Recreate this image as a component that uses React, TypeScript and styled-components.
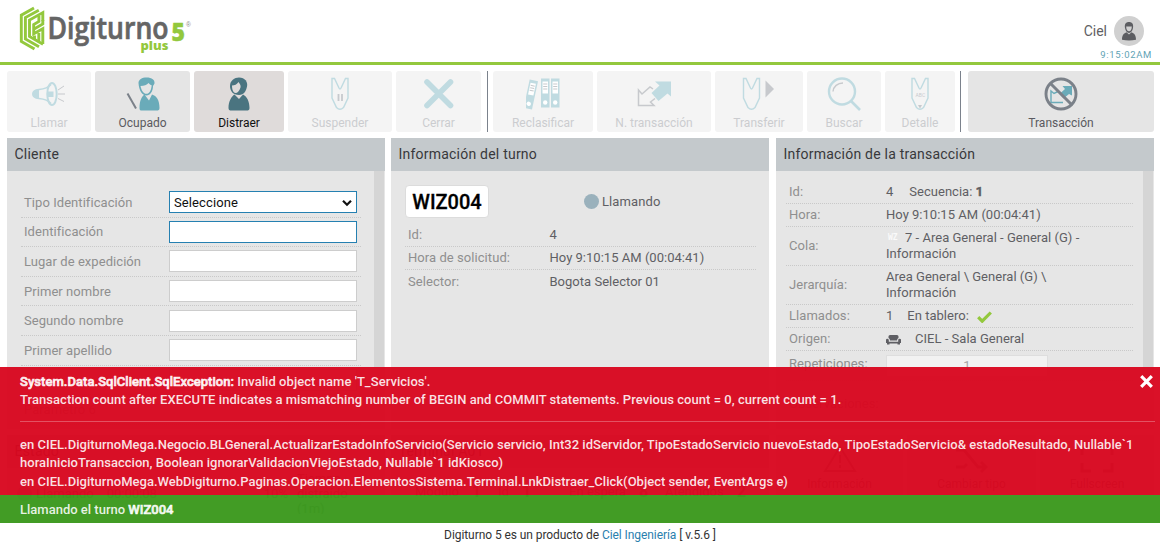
import React from "react";
import styled, { createGlobalStyle, css } from "styled-components";

const Global = createGlobalStyle`
  * { box-sizing: border-box; }
  html, body { margin: 0; padding: 0; background: #fff; overflow: hidden; }
  body { font-family: Roboto, "Liberation Sans", sans-serif; font-size: 13px; color: #5f5f64; }
`;

const Page = styled.div`
  position: relative;
  display: flex;
  flex-direction: column;
  width: 1160px;
  height: 547px;
  overflow: hidden;
`;

/* ---------- header ---------- */
const Header = styled.header`
  display: flex;
  justify-content: space-between;
  height: 65px;
  flex: none;
  border-bottom: 3px solid #93c83d;
`;
const LogoBox = styled.div`
  padding-left: 16px;
  line-height: 0;
`;
const UserBox = styled.div`
  display: flex;
  flex-direction: column;
  align-items: flex-end;
  padding: 16px 8px 0 0;
`;
const UserLine = styled.div`
  display: flex;
  align-items: center;
  gap: 7px;
  padding-right: 8px;
  font-size: 14px;
  line-height: 30px;
`;
const Clock = styled.div`
  font-size: 9.5px;
  line-height: 17px;
  letter-spacing: 0.65px;
  color: #5fa3b5;
`;

/* ---------- toolbar ---------- */
const Toolbar = styled.nav`
  display: flex;
  gap: 4px;
  height: 61px;
  flex: none;
  margin: 6px 6px 0 7px;
`;
type Tone = "normal" | "disabled" | "active";
const ToolButton = styled.div<{ $w: number; $tone: Tone }>`
  display: flex;
  flex-direction: column;
  align-items: center;
  flex: none;
  width: ${(p) => p.$w}px;
  padding-top: 6px;
  border-radius: 3px;
  background: #e5e5e5;
  color: #5a5a60;
  ${(p) => p.$tone === "disabled" && css`opacity: 0.42; color: #84888f;`}
  ${(p) => p.$tone === "active" && css`background: #dfdbda; color: #111;`}
`;
const ToolLabel = styled.span`
  margin-top: 4px;
  font-size: 12px;
  line-height: 16px;
  white-space: nowrap;
`;
const Divider = styled.i<{ $after: number; $before: number }>`
  flex: none;
  width: 1px;
  margin: 0 ${(p) => p.$after}px 0 ${(p) => p.$before}px;
  background: #7b828c;
`;

/* ---------- panels ---------- */
const Board = styled.main`
  display: grid;
  grid-template-columns: 384px 385px 378px;
  grid-template-rows: 291px 79px;
  row-gap: 6px;
  margin: 6px 0 0 7px;
`;
const Panel = styled.section`
  display: flex;
  flex-direction: column;
  width: 378px;
  min-height: 0;
  overflow: hidden;
  background: #e6e6e6;
`;
const PanelTitle = styled.h2`
  flex: none;
  margin: 0;
  height: 33px;
  padding-left: 7.5px;
  background: #c4c9cc;
  color: #38383b;
  font-size: 14px;
  font-weight: 400;
  line-height: 32px;
  letter-spacing: 0.22px;
`;
const PanelBody = styled.div`
  display: flex;
  flex: 1;
  min-height: 0;
`;
const Scroller = styled.i<{ $thumb: number }>`
  flex: none;
  width: 10px;
  height: ${(p) => p.$thumb}px;
  margin-right: 1px;
  background: #d5d5d5;
`;
const Form = styled.div`
  flex: 1;
  margin: 17px 13px 0 14px;
`;
const Line = css`
  border-bottom: 1px dotted #c9c9c9;
`;
const FormRow = styled.div`
  ${Line}
  display: flex;
  align-items: center;
  justify-content: space-between;
  height: 29.6px;
  padding: 0 4px 0 3px;
`;
const Label = styled.span<{ $w?: number }>`
  flex: none;
  ${(p) => p.$w && css`width: ${p.$w}px;`}
  color: #8f8f8f;
  letter-spacing: 0.06px;
`;
const Field = styled.div<{ $focus?: boolean }>`
  display: flex;
  align-items: center;
  justify-content: space-between;
  width: 188px;
  height: 22px;
  padding: 1px 3px 0 4px;
  border: 1px solid ${(p) => (p.$focus ? "#2580b1" : "#cdcdcd")};
  background: #fff;
  color: #111;
  letter-spacing: 0.1px;
`;

const Info = styled.div<{ $top: number; $left: number; $right: number }>`
  flex: 1;
  margin: ${(p) => p.$top}px ${(p) => p.$right}px 0 ${(p) => p.$left}px;
`;
const InfoRow = styled.div<{ $h?: number; $last?: boolean }>`
  ${Line}
  ${(p) => p.$last && css`border-bottom: 0;`}
  display: flex;
  align-items: center;
  height: ${(p) => p.$h ?? 23}px;
  padding-left: 3px;
  line-height: 16px;
  letter-spacing: 0.02px;
`;
const Value = styled.div`
  white-space: nowrap;
`;
const Gap = styled.span<{ $w: number }>`
  display: inline-block;
  width: ${(p) => p.$w}px;
`;
const TurnHead = styled.div`
  display: flex;
  align-items: center;
  height: 32px;
  margin-bottom: 7px;
`;
const Ticket = styled.b`
  width: 84px;
  border: 1px solid #dcdcdc;
  border-radius: 4px;
  background: #fff;
  color: #000;
  font-size: 20px;
  font-weight: 500;
  line-height: 32px;
  height: 33px;
  text-align: center;
  -webkit-text-stroke: 0.3px #000;
`;
const Dot = styled.i`
  flex: none;
  width: 15px;
  height: 15px;
  margin-right: 3px;
  border-radius: 50%;
  background: #9ab1bc;
`;
const TurnState = styled.div`
  display: flex;
  align-items: center;
  margin-left: 95px;
  letter-spacing: 0.1px;
`;
const QueueTag = styled.b`
  display: inline-block;
  width: 19px;
  padding-left: 2px;
  color: #fafafa;
  font: bold 8px/8px "DejaVu Sans Mono", monospace;
  vertical-align: 2px;
`;
const Stepper = styled.div`
  align-self: flex-start;
  width: 162px;
  height: 22px;
  margin-top: 4px;
  border: 1px solid #dedede;
  background: #f2f2f2;
  color: #a5a5a5;
  line-height: 20px;
  text-align: center;
`;
const RepeatLabel = styled(Label)`
  align-self: flex-start;
  margin-top: 5px;
`;
const Notes = styled.div`
  width: 243px;
  height: 42px;
  border: 1px solid #dcdcdc;
`;

const StatusLine = styled.div`
  display: flex;
  align-items: center;
  height: 46px;
  padding-top: 4px;
  padding-left: 10px;
  gap: 1px;
`;
const Meter = styled.span<{ $ml: number; $w?: number }>`
  margin-left: ${(p) => p.$ml}px;
  ${(p) => p.$w && css`width: ${p.$w}px;`}
  line-height: 15px;
`;
const Counters = styled.div`
  display: flex;
  align-items: center;
  height: 50px;
  padding-left: 24px;
  gap: 13px;
  b { font-size: 16px; margin-right: 4px; }
`;
const Shortcuts = styled.div`
  display: grid;
  grid-template-columns: 127px 129px 1fr;
  gap: 4px;
`;
const Shortcut = styled.div`
  display: flex;
  flex-direction: column;
  align-items: center;
  padding-top: 10px;
  gap: 4px;
  font-size: 12px;
  background: #e5e5e5;
`;

/* ---------- notifications ---------- */
const Notices = styled.div`
  position: absolute;
  left: 0;
  top: 367px;
  width: 1160px;
  color: rgba(255, 255, 255, 0.88);
  font-size: 13px;
  font-weight: 500;
`;
const ErrorNotice = styled.div`
  display: flex;
  height: 128px;
  padding: 6px 5px 0 20px;
  background: rgba(217, 7, 31, 0.96);
  line-height: 18px;
`;
const ErrorText = styled.div`
  flex: 1;
  white-space: nowrap;
`;
const ErrorLine = styled.div<{ $ls: number; $drop?: number }>`
  padding-top: ${(p) => p.$drop ?? 0}px;
  letter-spacing: ${(p) => p.$ls}px;
`;
const Strong = styled.b`
  font-weight: 500;
  -webkit-text-stroke: 0.7px currentColor;
`;
const Rule = styled.hr`
  margin: 12px 0 14px;
  height: 1px;
  border: 0;
  background: rgba(255, 255, 255, 0.28);
`;
const CloseIcon = styled.svg`
  position: absolute;
  top: 8px;
  right: 7px;
`;
const SuccessNotice = styled.div`
  height: 28px;
  padding-left: 20px;
  background: rgba(60, 153, 30, 0.97);
  line-height: 29px;
`;

const Footer = styled.footer`
  position: absolute;
  left: 0;
  bottom: 0;
  width: 1160px;
  height: 24px;
  color: #333;
  font-size: 12px;
  line-height: 24px;
  letter-spacing: -0.07px;
  text-align: center;
  a { color: #2a7fae; }
`;

/* ---------- drawings ---------- */
const Logo = () => (
  <svg width="180" height="60" viewBox="16 0 180 60">
    <g fill="none" stroke="#93c83d" strokeWidth="2.900" strokeLinejoin="miter">
      <path d="M34 8L21.300 15.200V41.500L34.500 49" />
      <path d="M38.800 10.200L25.400 17.500V39L39 46.800" />
      <path d="M42.800 21V12.600L29.500 20V36.500L43 44.200" />
      <path d="M38.900 16V21.500L33.700 24.500V33.800L42.800 28.800V44" />
      <path d="M33.700 29.300L42.800 24V20M38.800 33V41M34.500 35.500V39" />
    </g>
    <text x="47.500" y="39" fontFamily="Open Sans" fontWeight="600" fontSize="30" fill="#656565" stroke="#656565" strokeWidth=".7" textLength="121" lengthAdjust="spacingAndGlyphs">Digiturno</text>
    <text x="171.500" y="40.500" fontFamily="Open Sans" fontWeight="800" fontSize="25" fill="#93c83d" stroke="#93c83d" strokeWidth=".4" textLength="13.500" lengthAdjust="spacingAndGlyphs">5</text>
    <text x="140.500" y="50" fontFamily="Open Sans" fontWeight="800" fontSize="13" fill="#93c83d" textLength="28" lengthAdjust="spacingAndGlyphs">plus</text>
    <text x="186" y="27" fontFamily="Liberation Sans" fontSize="6.500" fill="#8a8a8a">®</text>
  </svg>
);

const Avatar = () => (
  <svg width="30" height="30" viewBox="0 0 30 30">
    <circle cx="15" cy="15" r="15" fill="#d0d0d0" />
    <path fill="#5c5d61" d="M8 23.800C8 19 10 17.300 12.500 16.300L15 18.500L17.500 16.300C20 17.300 22 19 22 23.800Q15 25 8 23.800Z" />
    <path fill="#5c5d61" d="M11 12C10.200 8 12 6 15 6s4.800 2 4 6c-.5 2.800-2 5-4 5s-3.500-2.200-4-5z" />
    <path fill="#d0d0d0" d="M12.200 10.500h5.600c0 3-1.100 4.700-2.800 4.700s-2.800-1.700-2.800-4.700z" />
  </svg>
);

const Icon = styled.svg.attrs({ width: 34, height: 34, viewBox: "0 0 34 34", fill: "none" })`
  flex: none;
`;
const TEAL = "#6aabb9";
const GREY = "#7b8189";

const CallIcon = () => (
  <Icon>
    <path stroke={TEAL} strokeWidth="1.600" d="M19 7.500C16 11 12 12 7 12.500 2 13 .8 15 .8 17s1.200 4 6.200 4.500c5 .5 9 1.500 12 5" />
    <path fill={TEAL} d="M7 12.500C2 13 .8 15 .8 17s1.200 4 6.200 4.500z" />
    <ellipse cx="20" cy="17" rx="4.700" ry="11" stroke={TEAL} strokeWidth="2" />
    <path fill={TEAL} d="M16 14.500h5.500v5.500H16z" />
    <path stroke={GREY} d="M26 13l6-4M26 17h7M26 21.500l6 3" />
  </Icon>
);
const BusyIcon = () => (
  <Icon>
    <path stroke={GREY} strokeWidth="2" d="M1.500 16.500l8.500 15" />
    <path fill={TEAL} d="M12.500 6C12.500 2.500 16 .5 20.500 .5 26 .5 29 3 28.500 6.500L27 9C27 14.500 24 18.500 20.500 18.500 16 18.500 13 13.500 12.500 6z" />
    <path fill="#e5e5e5" d="M14.500 9c3.500 0 6.500-1 8-3 1 1 2 2 3.200 2.200-.4 5-2.500 8.600-5.200 8.600-3 0-5.200-3.400-6-7.800z" />
    <path fill={TEAL} d="M13.500 31C13.500 23 16 19.500 18.500 17.500l4.500 6 3-6c4.500 1.500 7.500 5.500 7.500 13.500 0 2-1 2.500-3 2.500H16c-2 0-2.500-.5-2.500-2.500z" />
  </Icon>
);
const DistractIcon = () => (
  <Icon>
    <path fill="#4a7480" d="M8 9C8 3.500 12.500 .5 17 .5 23 .5 26 5 25 9.500 24 14 22 18 17 18 11 18 8 14 8 9z" />
    <path fill="#dfdbda" d="M10 8.500C12.500 8.500 15 7.500 16.500 5c1.500 2 2.500 3.500 2 5.500-1 3.500-3 5.500-5 5.500-2.500 0-3.500-4-3.500-7.500z" />
    <path fill="#4a7480" d="M6.500 31C6.500 24 9.500 19.500 12.500 17.500l4.500 4.500 4-4.500c4 2 6.500 7 6.500 13.500 0 2-1 2.500-3 2.500H9.500c-2 0-3-.5-3-2.500z" />
  </Icon>
);
const tieShape = "M9 1.500h2.500l4 8.500q1.500 4 3 0l4-8.500H25V21l-4.500 9.500q-3.500 3.500-7 0L9 21z";
const PauseIcon = () => (
  <Icon><path stroke={TEAL} strokeWidth="1.400" d={tieShape} /><path stroke={GREY} strokeWidth="1.800" d="M15.500 17v7M19 17v7" /></Icon>
);
const CrossIcon = () => (
  <Icon><path stroke={TEAL} strokeWidth="5.600" strokeLinecap="round" d="M5 5l23.500 23.500M28.500 5L5 28.500" /></Icon>
);
const BindersIcon = () => (
  <Icon>
    {["translate(4 1) rotate(12)", "translate(15 0)", "translate(25 0)"].map((t) => (
      <g key={t} transform={t}>
        <path fill={TEAL} d="M0 1.500h8.500v29H0z" />
        <path fill="#fff" d="M1.500 4.500h5.500v12H1.500z" />
        <path stroke={GREY} d="M2.200 7H6.300M2.200 9.500H6.300M2.200 12H6.300" />
        <circle cx="4.200" cy="25.500" r="2.200" fill="#fff" />
      </g>
    ))}
  </Icon>
);
const NewTxIcon = () => (
  <Icon>
    <path fill={TEAL} d="M18 4.500h16v15l-3.500-3-9 7.500-7-8 8-7.500z" />
    <path stroke={GREY} strokeWidth="1.500" d="M16 12L13 10 5 17l-3.500-4v15.500H17l-3.500-3.500 4.500-3.500" />
  </Icon>
);
const TransferIcon = () => (
  <Icon><path stroke={TEAL} strokeWidth="1.400" d={tieShape} transform="translate(-7.500 0)" /><path fill={GREY} d="M23.500 3.500l8.500 8.500-8.500 8.500z" /></Icon>
);
const SearchIcon = () => (
  <Icon><circle cx="15" cy="14.500" r="13" stroke={TEAL} strokeWidth="2.400" /><path stroke={TEAL} strokeWidth="2.600" d="M24 24l9 9" /><path stroke={GREY} strokeWidth="1.400" d="M6 14.500c.5-5 4.500-8.500 10-8.500" /></Icon>
);
const DetailIcon = () => (
  <Icon>
    <path stroke={TEAL} strokeWidth="1.400" d={tieShape} />
    <text x="12.500" y="20" fontSize="5" fontFamily="Roboto" fill={GREY}>ABC</text>
    <path fill={GREY} d="M15 28h4l-2 3.500z" />
  </Icon>
);
const NoTxIcon = () => (
  <Icon>
    <path fill={TEAL} d="M18.500 9H28v9.500L25 17l-5.500 4.500-4-4.500 5.500-5z" />
    <path stroke={TEAL} strokeWidth="1.400" d="M14 14.500l-4 2-3-2.500v11.500h12" />
    <circle cx="17" cy="17" r="15" stroke={GREY} strokeWidth="2.900" />
    <path stroke={GREY} strokeWidth="3" d="M6.500 6.500l21 21" />
  </Icon>
);
const Chevron = () => (
  <svg width="12" height="8" viewBox="0 0 12 8" fill="none"><path stroke="#111" strokeWidth="2.200" d="M2 1.800l4 4 4-4" /></svg>
);
const Check = styled.svg`
  margin-left: 8px;
  vertical-align: -2.5px;
`;
const Sofa = styled.svg`
  margin-right: 14px;
  vertical-align: -2px;
`;

type Tool = { label: string; w: number; tone: Tone; icon: React.FC };
const queueTools: Tool[] = [
  { label: "Llamar", w: 84, tone: "disabled", icon: CallIcon },
  { label: "Ocupado", w: 95, tone: "normal", icon: BusyIcon },
  { label: "Distraer", w: 90, tone: "active", icon: DistractIcon },
  { label: "Suspender", w: 104, tone: "disabled", icon: PauseIcon },
  { label: "Cerrar", w: 85, tone: "disabled", icon: CrossIcon },
];
const txTools: Tool[] = [
  { label: "Reclasificar", w: 100, tone: "disabled", icon: BindersIcon },
  { label: "N. transacción", w: 114, tone: "disabled", icon: NewTxIcon },
  { label: "Transferir", w: 88, tone: "disabled", icon: TransferIcon },
  { label: "Buscar", w: 74, tone: "disabled", icon: SearchIcon },
  { label: "Detalle", w: 70, tone: "disabled", icon: DetailIcon },
];
const Tools = ({ items }: { items: Tool[] }) => (
  <>
    {items.map(({ label, w, tone, icon: Glyph }) => (
      <ToolButton key={label} $w={w} $tone={tone}>
        <Glyph />
        <ToolLabel>{label}</ToolLabel>
      </ToolButton>
    ))}
  </>
);

export default function App() {
  return (
    <Page>
      <Global />
      <Header>
        <LogoBox><Logo /></LogoBox>
        <UserBox>
          <UserLine>Ciel<Avatar /></UserLine>
          <Clock>9:15:02AM</Clock>
        </UserBox>
      </Header>

      <Toolbar>
        <Tools items={queueTools} />
        <Divider $before={2} $after={1} />
        <Tools items={txTools} />
        <Divider $before={1} $after={3} />
        <Tools items={[{ label: "Transacción", w: 186, tone: "normal", icon: NoTxIcon }]} />
      </Toolbar>

      <Board>
        <Panel>
          <PanelTitle>Cliente</PanelTitle>
          <PanelBody>
            <Form>
              <FormRow><Label>Tipo Identificación</Label><Field $focus>Seleccione<Chevron /></Field></FormRow>
              <FormRow><Label>Identificación</Label><Field $focus /></FormRow>
              <FormRow><Label>Lugar de expedición</Label><Field /></FormRow>
              <FormRow><Label>Primer nombre</Label><Field /></FormRow>
              <FormRow><Label>Segundo nombre</Label><Field /></FormRow>
              <FormRow><Label>Primer apellido</Label><Field /></FormRow>
              <FormRow><Label /><Field /></FormRow>
              <FormRow><Label>Parametro 6</Label></FormRow>
            </Form>
            <Scroller $thumb={240} />
          </PanelBody>
        </Panel>

        <Panel>
          <PanelTitle>Información del turno</PanelTitle>
          <Info $top={14} $left={14} $right={13}>
            <TurnHead>
              <Ticket>WIZ004</Ticket>
              <TurnState><Dot />Llamando</TurnState>
            </TurnHead>
            <InfoRow><Label $w={141.5}>Id:</Label><Value>4</Value></InfoRow>
            <InfoRow><Label $w={141.5}>Hora de solicitud:</Label><Value>Hoy 9:10:15 AM (00:04:41)</Value></InfoRow>
            <InfoRow $last><Label $w={141.5}>Selector:</Label><Value>Bogota Selector 01</Value></InfoRow>
          </Info>
        </Panel>

        <Panel>
          <PanelTitle>Información de la transacción</PanelTitle>
          <PanelBody>
            <Info $top={10} $left={10} $right={10}>
              <InfoRow><Label $w={97}>Id:</Label><Value>4<Gap $w={16} />Secuencia: <Strong>1</Strong></Value></InfoRow>
              <InfoRow><Label $w={97}>Hora:</Label><Value>Hoy 9:10:15 AM (00:04:41)</Value></InfoRow>
              <InfoRow $h={39}><Label $w={97}>Cola:</Label><Value><QueueTag>WZ</QueueTag>7 - Area General - General (G) -<br />Información</Value></InfoRow>
              <InfoRow $h={39}><Label $w={97}>Jerarquía:</Label><Value>Area General \ General (G) \<br />Información</Value></InfoRow>
              <InfoRow>
                <Label $w={97}>Llamados:</Label>
                <Value>
                  1<Gap $w={14} />En tablero:
                  <Check width="15" height="12" viewBox="0 0 15 12" fill="none"><path stroke="#93c83d" strokeWidth="3.200" d="M1.200 6.200l4 4L13.800 1.500" /></Check>
                </Value>
              </InfoRow>
              <InfoRow>
                <Label $w={97}>Origen:</Label>
                <Value>
                  <Sofa width="15" height="10" viewBox="0 0 15 10"><path fill="#5f5f64" d="M2.500 3V1.500Q2.500 0 4 0h7q1.500 0 1.500 1.500V3q-1.500.5-1.500 2.500H4Q4 3.500 2.500 3zM0 5q0-1.300 1.300-1.300T2.800 5v1.700h9.400V5q0-1.300 1.500-1.300T15 5v3h-1v1.500h-2.500V8.500h-8v1H1V8H0z" /></Sofa>
                  CIEL - Sala General
                </Value>
              </InfoRow>
              <InfoRow $h={30}><RepeatLabel $w={97}>Repeticiones:</RepeatLabel><Stepper>1</Stepper></InfoRow>
              <InfoRow $h={46} $last><Label $w={97}>Observaciones:</Label><Notes /></InfoRow>
            </Info>
            <Scroller $thumb={240} />
          </PanelBody>
        </Panel>

        <Panel>
          <PanelTitle>Estado</PanelTitle>
          <StatusLine>
            <Dot />Llamando
            <Meter $ml={12}>00:00:08</Meter>
            <Meter $ml={106}>10%</Meter>
            <Meter $ml={8} $w={60}>Tiempo distraído (1m)</Meter>
          </StatusLine>
        </Panel>
        <Panel>
          <PanelTitle>Terminal A01</PanelTitle>
          <Counters>Módulo <b>1</b> Id <b>1</b> <Gap $w={8} />En espera <b>8</b> Atendidos <b>2</b></Counters>
        </Panel>
        <Shortcuts>
          <Shortcut>
            <svg width="34" height="28" viewBox="0 0 34 28" fill="none" stroke={GREY} strokeWidth="2"><path d="M17 2l15 24H2zM17 10v8M17 20v3" /></svg>
            Información
          </Shortcut>
          <Shortcut>
            <svg width="32" height="28" viewBox="0 0 32 28" fill="none" stroke={GREY} strokeWidth="3"><path d="M0 5h8l14 17h8M0 22h8l3-3M25 17l5 5-5 5" /></svg>
            Cambiar tipo
          </Shortcut>
          <Shortcut>
            <svg width="34" height="28" viewBox="0 0 34 28" fill="none" stroke={GREY} strokeWidth="3"><path d="M2 10V2h9M23 2h9v8M2 18v8h9M23 26h9v-8" /></svg>
            Fullscreen
          </Shortcut>
        </Shortcuts>
      </Board>

      <Notices>
        <ErrorNotice>
          <ErrorText>
            <ErrorLine $ls={0.045}><Strong>System.Data.SqlClient.SqlException:</Strong> Invalid object name 'T_Servicios'.</ErrorLine>
            <ErrorLine $ls={0.045}>Transaction count after EXECUTE indicates a mismatching number of BEGIN and COMMIT statements. Previous count = 0, current count = 1.</ErrorLine>
            <Rule />
            <ErrorLine $ls={0.022}>en CIEL.DigiturnoMega.Negocio.BLGeneral.ActualizarEstadoInfoServicio(Servicio servicio, Int32 idServidor, TipoEstadoServicio nuevoEstado, TipoEstadoServicio&amp; estadoResultado, Nullable`1</ErrorLine>
            <ErrorLine $ls={0.03}>horaInicioTransaccion, Boolean ignorarValidacionViejoEstado, Nullable`1 idKiosco)</ErrorLine>
            <ErrorLine $ls={0.018} $drop={1}>en CIEL.DigiturnoMega.WebDigiturno.Paginas.Operacion.ElementosSistema.Terminal.LnkDistraer_Click(Object sender, EventArgs e)</ErrorLine>
          </ErrorText>
          <CloseIcon width="13" height="13" viewBox="0 0 13 13"><path stroke="#fff" strokeWidth="3.200" d="M1.200 1.200l10.600 10.600M11.800 1.200L1.200 11.800" /></CloseIcon>
        </ErrorNotice>
        <SuccessNotice>Llamando el turno <Strong>WIZ004</Strong></SuccessNotice>
      </Notices>

      <Footer>Digiturno 5 es un producto de <a>Ciel Ingeniería</a> [ v.5.6 ]</Footer>
    </Page>
  );
}
